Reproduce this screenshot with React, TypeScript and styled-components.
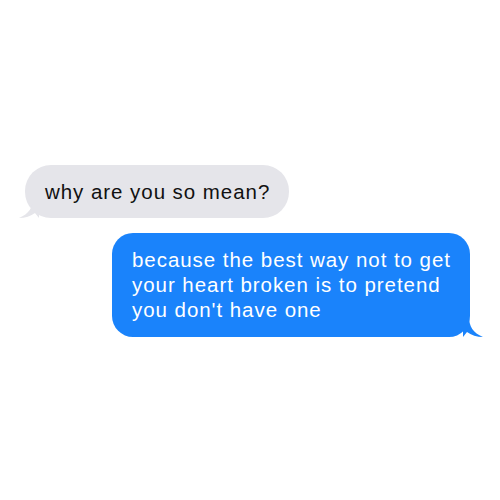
import React from "react";
import styled, { createGlobalStyle } from "styled-components";

const Global = createGlobalStyle`
  html, body { margin: 0; padding: 0; background: #ffffff; }
  body { font-family: "Liberation Sans", Arial, sans-serif; }
`;

const Page = styled.div`
  width: 500px;
  height: 500px;
  box-sizing: border-box;
  padding: 165px 30px 0 25px;
  display: flex;
  flex-direction: column;
  gap: 15px;
`;

const Bubble = styled.div<{ $sent?: boolean }>`
  position: relative;
  align-self: ${(p) => (p.$sent ? "flex-end" : "flex-start")};
  box-sizing: border-box;
  background: ${(p) => (p.$sent ? "#1a83fb" : "#e5e5ea")};
  color: ${(p) => (p.$sent ? "#ffffff" : "#111111")};
  font-size: 20.5px;
  letter-spacing: 0.95px;
  line-height: ${(p) => (p.$sent ? "25px" : "22px")};
  border-radius: ${(p) => (p.$sent ? "21px" : "26px")};
  padding: ${(p) => (p.$sent ? "14px 12px 15px 20px" : "16px 19px 15px 20px")};
  width: ${(p) => (p.$sent ? "358px" : "auto")};
`;

const Tail = styled.svg<{ $sent?: boolean }>`
  position: absolute;
  bottom: 0;
  width: 20px;
  height: 20px;
  ${(p) => (p.$sent ? "right: -13px;" : "left: -6px;")}
`;

export default function App() {
  return (
    <>
      <Global />
      <Page>
        <Bubble>
          <Tail viewBox="0 0 20 20">
            <path d="M14 0 C14 9 10 16 0 20 C6 20 12 18 16 15 L20 20 L20 0 Z" fill="#e5e5ea" />
          </Tail>
          why are you so mean?
        </Bubble>
        <Bubble $sent>
          <Tail $sent viewBox="0 0 20 20">
            <path d="M6 0 C6 9 10 16 20 20 C14 20 8 18 4 15 L0 20 L0 0 Z" fill="#1a83fb" />
          </Tail>
          because the best way not to get your heart broken is to pretend you don't have one
        </Bubble>
      </Page>
    </>
  );
}
